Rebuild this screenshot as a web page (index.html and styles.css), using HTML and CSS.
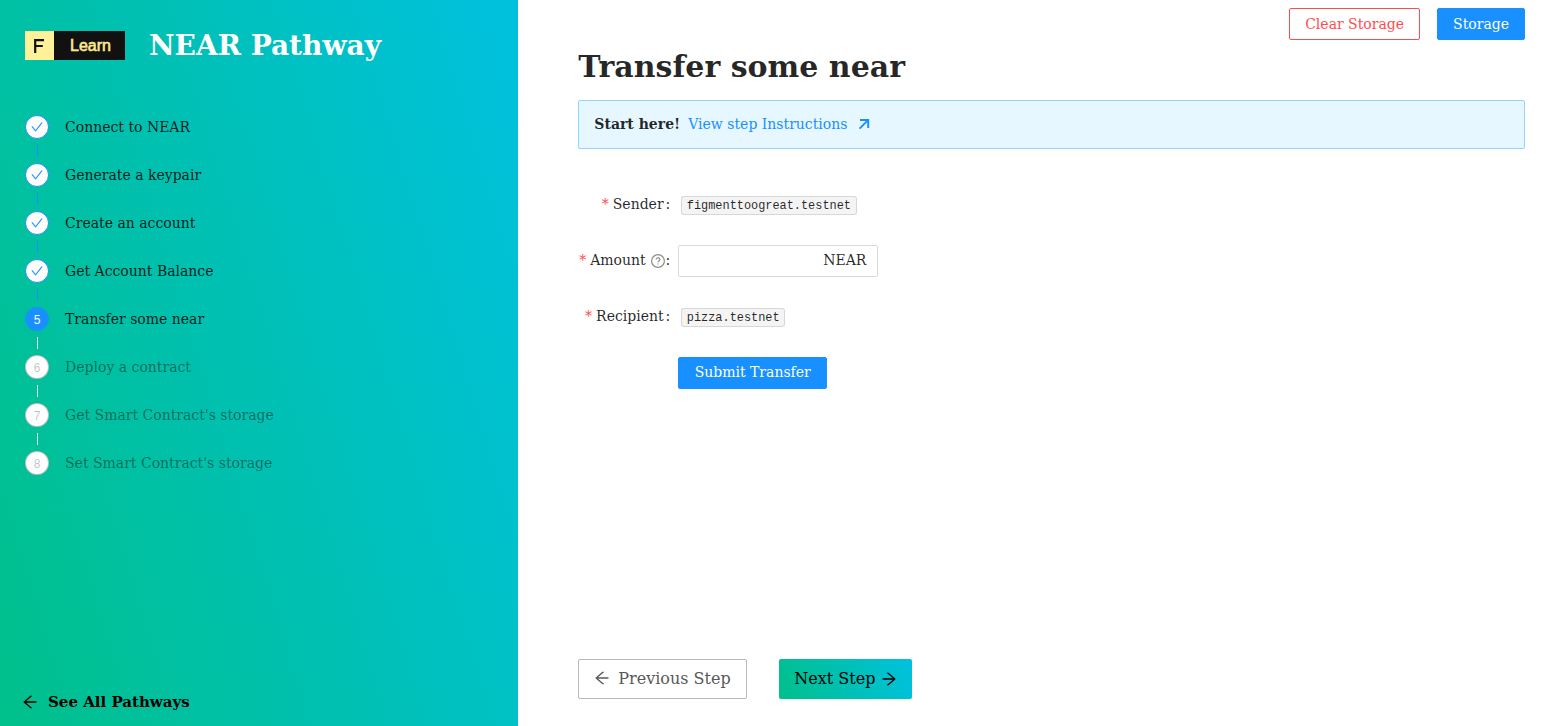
FILE: index.html
```html
<!DOCTYPE html>
<html lang="en">
<head>
<meta charset="utf-8">
<title>NEAR Pathway</title>
<link rel="stylesheet" href="styles.css">
</head>
<body>
<svg class="defs" aria-hidden="true">
  <symbol id="check" viewBox="0 0 1024 1024"><path d="M912 190h-69.9c-9.8 0-19.1 4.5-25.1 12.2L404.7 724.5 207 474a32 32 0 00-25.1-12.2H112c-6.7 0-10.4 7.7-6.3 12.9l273.9 347c12.8 16.2 37.4 16.2 50.3 0l488.4-618.9c4.1-5.1.4-12.8-6.3-12.8z"/></symbol>
  <symbol id="left" viewBox="0 0 1024 1024"><path d="M872 474H286.9l350.2-304c5.6-4.9 2.2-14-5.2-14h-88.5c-3.9 0-7.6 1.4-10.5 3.9L155 487.8a31.96 31.96 0 000 48.3L535.1 866c1.5 1.3 3.3 2 5.2 2h91.5c7.4 0 10.8-9.2 5.2-14L286.9 550H872c4.4 0 8-3.6 8-8v-60c0-4.4-3.6-8-8-8z"/></symbol>
  <symbol id="right" viewBox="0 0 1024 1024"><path d="M869 487.8L491.2 159.9c-2.9-2.5-6.6-3.9-10.5-3.9h-88.5c-7.4 0-10.8 9.2-5.2 14l350.2 304H152c-4.4 0-8 3.6-8 8v60c0 4.4 3.6 8 8 8h585.1L386.9 854c-5.6 4.9-2.2 14 5.2 14h91.5c1.9 0 3.8-.7 5.2-2L869 536.2a32.07 32.07 0 000-48.4z"/></symbol>
</svg>
<div class="layout">
  <aside class="sidebar">
    <header class="brand">
      <div class="logo"><span class="logo-mark"><svg class="mark" viewBox="0 0 10 14"><path d="M1.2 14V1.1H10M1.2 7H8.8"/></svg></span><span class="logo-word">Learn</span></div>
      <div class="brand-title">NEAR Pathway</div>
    </header>
    <ol class="steps">
      <li class="step done"><span class="dot"><svg class="check"><use href="#check"/></svg></span><span>Connect to NEAR</span></li>
      <li class="step done"><span class="dot"><svg class="check"><use href="#check"/></svg></span><span>Generate a keypair</span></li>
      <li class="step done"><span class="dot"><svg class="check"><use href="#check"/></svg></span><span>Create an account</span></li>
      <li class="step done"><span class="dot"><svg class="check"><use href="#check"/></svg></span><span>Get Account Balance</span></li>
      <li class="step active"><span class="dot">5</span><span>Transfer some near</span></li>
      <li class="step wait"><span class="dot">6</span><span>Deploy a contract</span></li>
      <li class="step wait"><span class="dot">7</span><span>Get Smart Contract's storage</span></li>
      <li class="step wait"><span class="dot">8</span><span>Set Smart Contract's storage</span></li>
    </ol>
    <a class="all"><svg class="arrow"><use href="#left"/></svg><span>See All Pathways</span></a>
  </aside>
  <main class="main">
    <div class="tools">
      <button class="btn danger">Clear Storage</button>
      <button class="btn primary">Storage</button>
    </div>
    <h1 class="title">Transfer some near</h1>
    <div class="alert">
      <strong>Start here!</strong>
      <a class="link">View step Instructions</a>
      <svg class="out" viewBox="0 0 12 12"><path d="M1.6 10.6L10 2.2M2 2H10.2V10"/></svg>
    </div>
    <form class="form">
      <div class="row"><label class="label"><i class="star">*</i>Sender<b class="colon">:</b></label><code class="code">figmenttoogreat.testnet</code></div>
      <div class="row"><label class="label"><i class="star">*</i>Amount<svg class="help" viewBox="0 0 14 14"><circle cx="7" cy="7" r="6.4"/><path d="M5.1 5.6c0-1 .8-1.8 1.9-1.8s1.9.7 1.9 1.7c0 1.3-1.9 1.4-1.9 2.8"/><path d="M7 9.4v1.1"/></svg><b class="colon">:</b></label><div class="input">NEAR</div></div>
      <div class="row"><label class="label"><i class="star">*</i>Recipient<b class="colon">:</b></label><code class="code">pizza.testnet</code></div>
      <div class="row"><span class="label"></span><button type="button" class="btn primary submit">Submit Transfer</button></div>
    </form>
    <nav class="nav">
      <button class="big prev"><svg class="arrow"><use href="#left"/></svg>Previous Step</button>
      <button class="big next">Next Step<svg class="arrow"><use href="#right"/></svg></button>
    </nav>
  </main>
</div>
</body>
</html>
```
FILE: styles.css
```css
* { box-sizing: border-box; }
body {
  margin: 0;
  font: 14px/22px "DejaVu Serif", serif;
  color: rgba(0, 0, 0, .85);
  background: #fff;
}
svg { fill: currentColor; flex: none; }
.defs { display: none; }
button { font: inherit; margin: 0; white-space: nowrap; }
.layout { display: flex; height: 726px; overflow: hidden; }

.sidebar {
  display: flex;
  flex-direction: column;
  flex: none;
  width: 518px;
  padding: 24px 22px 13px 25px;
  background: linear-gradient(73deg, #00c08b, #00c1de);
}
.brand { display: flex; align-items: center; gap: 24px; height: 43px; }
.logo {
  display: flex;
  width: 100px;
  height: 29px;
  font-family: "Liberation Sans", sans-serif;
  line-height: 29px;
  text-align: center;
}
.logo-mark { display: flex; align-items: center; width: 29px; padding: 1px 0 0 9px; background: #fff09a; color: #111; }
.mark { width: 10px; height: 14px; fill: none; stroke: currentColor; stroke-width: 2.2; }
.logo-word { flex: 1; padding-left: 2px; background: #111; color: #ffe98f; font-size: 16px; -webkit-text-stroke: .6px #ffe98f; }
.brand-title { color: #fff; font-size: 28px; font-weight: 700; line-height: 40px; }

.steps { list-style: none; margin: 48px 0 0; padding: 0; }
.step { position: relative; display: flex; gap: 16px; height: 48px; line-height: 24px; color: rgba(0, 0, 0, .85); }
.step:not(:last-child)::after {
  content: "";
  position: absolute;
  left: 12px;
  top: 30px;
  width: 1px;
  height: 12px;
  background: #f0f0f0;
}
.step.done:not(:last-child)::after { background: #1890ff; }
.dot {
  display: flex;
  align-items: center;
  justify-content: center;
  width: 24px;
  height: 24px;
  border: 1px solid #1890ff;
  border-radius: 50%;
  background: #fff;
  color: #1890ff;
  font: 12px/20px "Liberation Sans", sans-serif;
}
.dot { padding-top: 2px; }
.done .dot { padding-top: 0; }
.check { width: 14px; height: 14px; }
.active .dot { background: #1890ff; color: #fff; }
.step.wait { color: rgba(0, 0, 0, .45); }
.wait .dot { border-color: rgba(0, 0, 0, .25); color: rgba(0, 0, 0, .25); }
.arrow { width: 18px; height: 18px; }
.all {
  display: flex;
  align-items: center;
  gap: 9px;
  margin: auto 0 0 -4px;
  color: #000;
  font-size: 15px;
  font-weight: 700;
}

.main { display: flex; flex-direction: column; flex: 1; padding: 8px 27px 27px 60.33px; }
.tools { display: flex; justify-content: flex-end; gap: 17px; }
.btn { height: 32px; padding: 0 15px; border: 1px solid; border-radius: 2px; line-height: 30px; }
.danger { background: #fff; color: #ff4d4f; }
.primary { background: #1890ff; border-color: #1890ff; color: #fff; }
.submit { padding: 0 15.3px 2px; line-height: 28px; }
.title { margin: 7px 0 14px; font-size: 30px; line-height: 39px; }
.alert {
  display: flex;
  align-items: center;
  height: 49px;
  padding: 0 15px 2px;
  border: 1px solid #91d5ff;
  border-radius: 2px;
  background: #e6f7ff;
}
.link { margin-left: 8px; color: #1890ff; }
.out { width: 12px; height: 12px; margin-left: 11px; fill: none; stroke: #1890ff; stroke-width: 1.9; }
.form { display: flex; flex-direction: column; gap: 24px; margin-top: 40px; }
.row { display: flex; align-items: center; height: 32px; }
.label { display: flex; align-items: center; justify-content: flex-end; width: 100px; padding-bottom: 2px; }
.star { margin-right: 4px; color: #ff4d4f; font: 14px/14px "DejaVu Serif", serif; }
.colon { margin: 0 8px 0 2px; font-weight: 400; }
.help { width: 14px; height: 14px; margin: 2px -1px 0 5px; fill: none; stroke: rgba(0, 0, 0, .45); stroke-width: 1.2; }
.code {
  margin: 1px 0 0 2.7px;
  padding: 2px 4.8px 1px;
  border: 1px solid rgba(100, 100, 100, .2);
  border-radius: 3px;
  background: rgba(150, 150, 150, .1);
  font: 11.9px/14px "Liberation Mono", monospace;
}
.input { width: 200px; height: 32px; padding: 0 11px; border: 1px solid #d9d9d9; border-radius: 2px; line-height: 28px; text-align: right; }
.nav { display: flex; gap: 32px; margin-top: auto; }
.big { display: flex; align-items: center; height: 40px; border: 1px solid #b8b8b8; border-radius: 2px; font-size: 16px; }
.prev { gap: 7px; padding: 0 15px 0 14px; width: 169px; background: #fff; color: #595959; }
.prev .arrow { margin-top: -2px; }
.next { gap: 5px; padding: 0 14px 0 15px; width: 133px; border: 0; background: linear-gradient(73deg, #00c08b, #00c1de); color: #000; }
```
